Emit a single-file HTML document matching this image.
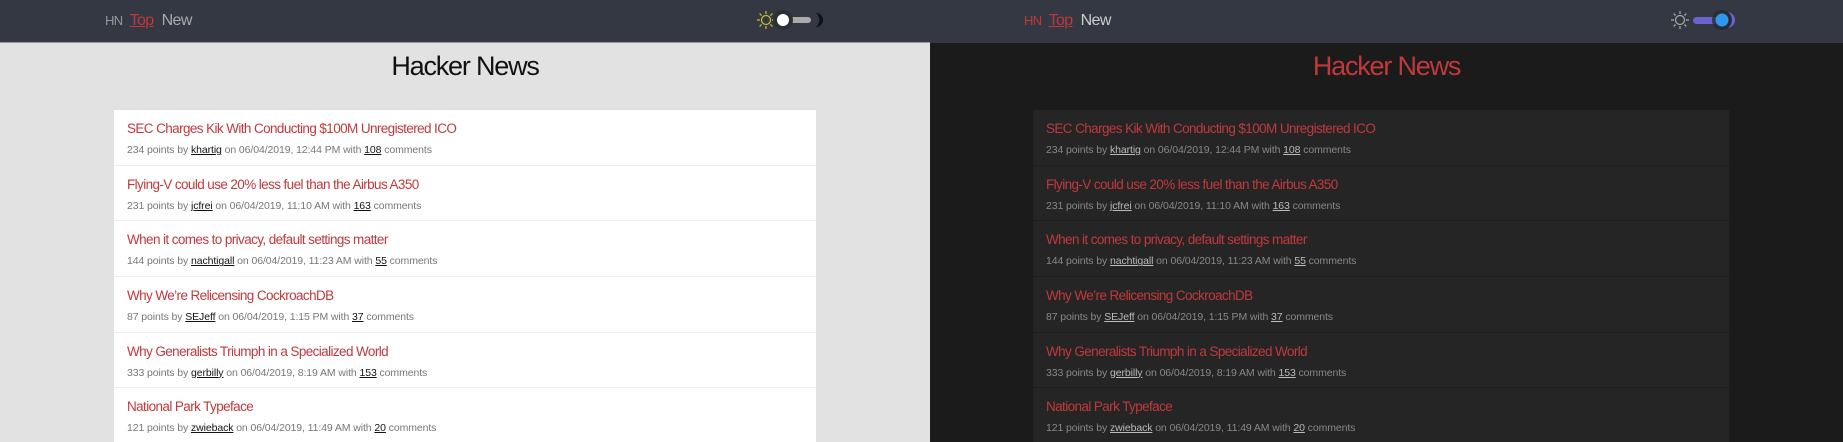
<!DOCTYPE html>
<html><head><meta charset="utf-8"><style>
*{margin:0;padding:0;box-sizing:border-box}
body{width:1843px;height:442px;overflow:hidden;font-family:"Liberation Sans",sans-serif;position:relative;background:#1b1b1b}
.pane{position:absolute;top:0;height:442px;overflow:hidden}
.hdr{position:absolute;left:0;top:0;right:0;height:43px;background:#343842}
.nav{position:absolute;top:12px;font-size:16px;letter-spacing:-0.6px}
.nav .hn{font-size:13px;color:#999;margin-right:7px}
.nav .top{color:#c2373a;text-decoration:underline;margin-right:8px}
.nav .new{color:#aaa}
h1{position:absolute;top:51px;left:0;right:0;text-align:center;font-weight:normal;font-size:27px;letter-spacing:-1.2px}
.card{position:absolute;top:110px}
.it{height:55.7px;border-bottom:1px solid;padding:8px 13px 0}
.t{font-size:13.5px;letter-spacing:-0.6px;color:#c0393b;height:21px;line-height:21px}
.m{font-size:10.5px;letter-spacing:-0.1px;line-height:16px;margin-top:3px}
.m u{text-decoration:underline}
.tog{position:absolute;top:9px;width:90px;height:22px}
</style></head><body>
<div class="pane" style="left:0;width:930px;background:#e2e2e2">
 <div class="hdr" style="border-bottom:1px solid #999"></div>
 <div class="nav" style="left:105px"><span class="hn">HN</span><span class="top">Top</span><span class="new">New</span></div>
 <svg class="tog" style="left:750px" viewBox="0 0 90 22">
  <g stroke="#c8c431" stroke-width="1.2" fill="none"><circle cx="16" cy="11" r="4.5"/>
  <path d="M16 2v3M16 17v3M7 11h3M22 11h3M9.6 4.6l2 2M20.4 15.4l2 2M9.6 17.4l2-2M20.4 6.6l2-2"/></g>
  <rect x="33" y="8" width="28" height="6" rx="3" fill="#aaa"/>
  <circle cx="33" cy="11" r="10" fill="#2b2f36"/>
  <circle cx="33" cy="11" r="6" fill="#fff"/>
  <path d="M66 4a7 7 0 0 1 0 14a9 9 0 0 0 0-14z" fill="#111"/>
 </svg>
 <h1 style="color:#111">Hacker News</h1>
 <div class="card" style="left:114px;width:702px;background:#fff">
  <div class="it" style="border-color:#eee"><div class="t">SEC Charges Kik With Conducting $100M Unregistered ICO</div><div class="m" style="color:#777">234 points by <u style="color:#111">khartig</u> on 06/04/2019, 12:44 PM with <u style="color:#111">108</u> comments</div></div>
  <div class="it" style="border-color:#eee"><div class="t">Flying-V could use 20% less fuel than the Airbus A350</div><div class="m" style="color:#777">231 points by <u style="color:#111">jcfrei</u> on 06/04/2019, 11:10 AM with <u style="color:#111">163</u> comments</div></div>
  <div class="it" style="border-color:#eee"><div class="t">When it comes to privacy, default settings matter</div><div class="m" style="color:#777">144 points by <u style="color:#111">nachtigall</u> on 06/04/2019, 11:23 AM with <u style="color:#111">55</u> comments</div></div>
  <div class="it" style="border-color:#eee"><div class="t">Why We’re Relicensing CockroachDB</div><div class="m" style="color:#777">87 points by <u style="color:#111">SEJeff</u> on 06/04/2019, 1:15 PM with <u style="color:#111">37</u> comments</div></div>
  <div class="it" style="border-color:#eee"><div class="t">Why Generalists Triumph in a Specialized World</div><div class="m" style="color:#777">333 points by <u style="color:#111">gerbilly</u> on 06/04/2019, 8:19 AM with <u style="color:#111">153</u> comments</div></div>
  <div class="it" style="border-color:#eee"><div class="t">National Park Typeface</div><div class="m" style="color:#777">121 points by <u style="color:#111">zwieback</u> on 06/04/2019, 11:49 AM with <u style="color:#111">20</u> comments</div></div>
 </div>
</div>
<div class="pane" style="left:930px;width:913px;background:#1b1b1b">
 <div class="hdr"></div>
 <div class="nav" style="left:94px"><span class="hn" style="color:#c2373a">HN</span><span class="top">Top</span><span class="new" style="color:#ccc">New</span></div>
 <svg class="tog" style="left:735px" viewBox="0 0 90 22">
  <g stroke="#aaa" stroke-width="1.2" fill="none"><circle cx="15" cy="11" r="4.5"/>
  <path d="M15 2v3M15 17v3M6 11h3M21 11h3M8.6 4.6l2 2M19.4 15.4l2 2M8.6 17.4l2-2M19.4 6.6l2-2"/></g>
  <rect x="28" y="8" width="30" height="7" rx="3.5" fill="#6a63d0"/>
  <path d="M62 3a8 8 0 0 1 0 16a9.5 9.5 0 0 0 0-16z" fill="#6a63d0"/>
  <circle cx="57" cy="11" r="10" fill="#25282e" opacity=".8"/>
  <circle cx="57" cy="11" r="6.5" fill="#2f97ee"/>
 </svg>
 <h1 style="color:#c0393b">Hacker News</h1>
 <div class="card" style="left:103px;width:696px;background:#262526">
  <div class="it" style="border-color:#1f1f1f"><div class="t">SEC Charges Kik With Conducting $100M Unregistered ICO</div><div class="m" style="color:#888">234 points by <u style="color:#bbb">khartig</u> on 06/04/2019, 12:44 PM with <u style="color:#bbb">108</u> comments</div></div>
  <div class="it" style="border-color:#1f1f1f"><div class="t">Flying-V could use 20% less fuel than the Airbus A350</div><div class="m" style="color:#888">231 points by <u style="color:#bbb">jcfrei</u> on 06/04/2019, 11:10 AM with <u style="color:#bbb">163</u> comments</div></div>
  <div class="it" style="border-color:#1f1f1f"><div class="t">When it comes to privacy, default settings matter</div><div class="m" style="color:#888">144 points by <u style="color:#bbb">nachtigall</u> on 06/04/2019, 11:23 AM with <u style="color:#bbb">55</u> comments</div></div>
  <div class="it" style="border-color:#1f1f1f"><div class="t">Why We’re Relicensing CockroachDB</div><div class="m" style="color:#888">87 points by <u style="color:#bbb">SEJeff</u> on 06/04/2019, 1:15 PM with <u style="color:#bbb">37</u> comments</div></div>
  <div class="it" style="border-color:#1f1f1f"><div class="t">Why Generalists Triumph in a Specialized World</div><div class="m" style="color:#888">333 points by <u style="color:#bbb">gerbilly</u> on 06/04/2019, 8:19 AM with <u style="color:#bbb">153</u> comments</div></div>
  <div class="it" style="border-color:#1f1f1f"><div class="t">National Park Typeface</div><div class="m" style="color:#888">121 points by <u style="color:#bbb">zwieback</u> on 06/04/2019, 11:49 AM with <u style="color:#bbb">20</u> comments</div></div>
 </div>
</div>
</body></html>
